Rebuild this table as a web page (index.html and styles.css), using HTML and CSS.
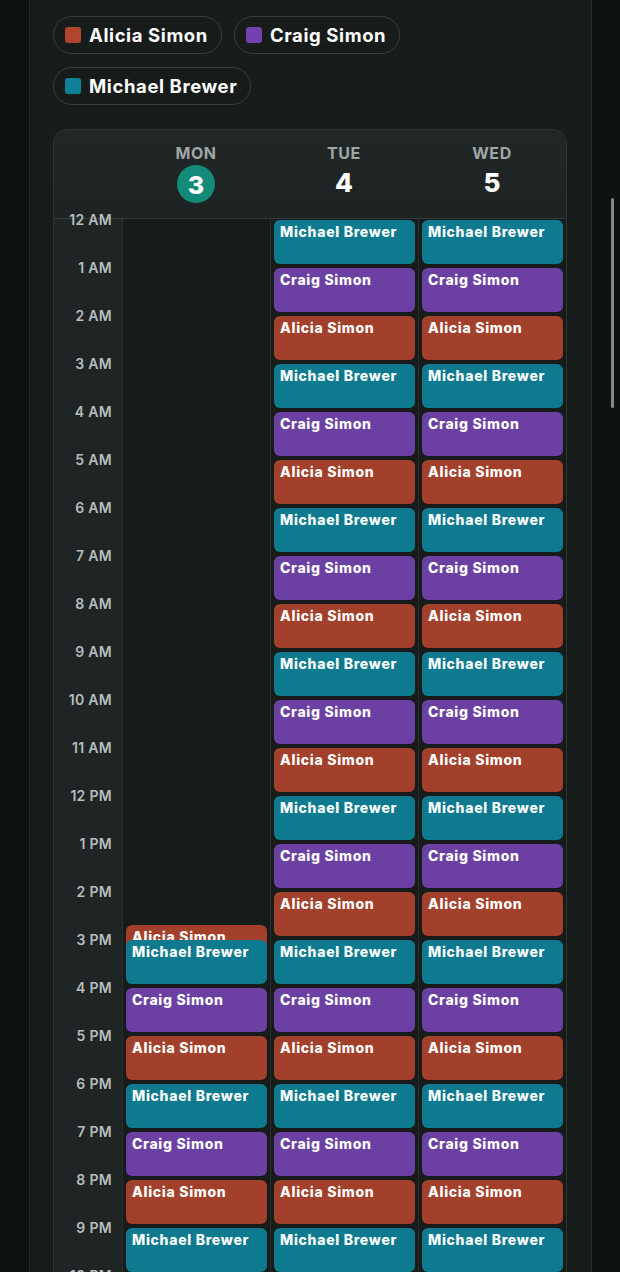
FILE: index.html
```html
<!DOCTYPE html>
<html lang="en">
<head>
<meta charset="utf-8">
<title>Calendar</title>
<link rel="stylesheet" href="styles.css">
</head>
<body>
<div class="panel">
  <div class="legend">
    <div class="chip"><span class="sw a"></span>Alicia Simon</div>
    <div class="chip"><span class="sw c"></span>Craig Simon</div>
    <div class="chip"><span class="sw m"></span>Michael Brewer</div>
  </div>
  <div class="card">
    <div class="head">
      <div></div>
      <div class="day"><div class="dn">MON</div><div class="num today">3</div></div>
      <div class="day"><div class="dn">TUE</div><div class="num">4</div></div>
      <div class="day"><div class="dn">WED</div><div class="num">5</div></div>
    </div>
    <div class="grid">
      <div class="times">
        <div class="hr"><span>12 AM</span></div>
        <div class="hr"><span>1 AM</span></div>
        <div class="hr"><span>2 AM</span></div>
        <div class="hr"><span>3 AM</span></div>
        <div class="hr"><span>4 AM</span></div>
        <div class="hr"><span>5 AM</span></div>
        <div class="hr"><span>6 AM</span></div>
        <div class="hr"><span>7 AM</span></div>
        <div class="hr"><span>8 AM</span></div>
        <div class="hr"><span>9 AM</span></div>
        <div class="hr"><span>10 AM</span></div>
        <div class="hr"><span>11 AM</span></div>
        <div class="hr"><span>12 PM</span></div>
        <div class="hr"><span>1 PM</span></div>
        <div class="hr"><span>2 PM</span></div>
        <div class="hr"><span>3 PM</span></div>
        <div class="hr"><span>4 PM</span></div>
        <div class="hr"><span>5 PM</span></div>
        <div class="hr"><span>6 PM</span></div>
        <div class="hr"><span>7 PM</span></div>
        <div class="hr"><span>8 PM</span></div>
        <div class="hr"><span>9 PM</span></div>
        <div class="hr"><span>10 PM</span></div>
        <div class="hr"><span>11 PM</span></div>
      </div>
      <div class="col mon">
        <div class="ev a">Alicia Simon</div>
        <div class="ev m overlap">Michael Brewer</div>
        <div class="ev c">Craig Simon</div>
        <div class="ev a">Alicia Simon</div>
        <div class="ev m">Michael Brewer</div>
        <div class="ev c">Craig Simon</div>
        <div class="ev a">Alicia Simon</div>
        <div class="ev m">Michael Brewer</div>
        <div class="ev c">Craig Simon</div>
        <div class="ev a">Alicia Simon</div>
      </div>
      <div class="col">
        <div class="ev m">Michael Brewer</div>
        <div class="ev c">Craig Simon</div>
        <div class="ev a">Alicia Simon</div>
        <div class="ev m">Michael Brewer</div>
        <div class="ev c">Craig Simon</div>
        <div class="ev a">Alicia Simon</div>
        <div class="ev m">Michael Brewer</div>
        <div class="ev c">Craig Simon</div>
        <div class="ev a">Alicia Simon</div>
        <div class="ev m">Michael Brewer</div>
        <div class="ev c">Craig Simon</div>
        <div class="ev a">Alicia Simon</div>
        <div class="ev m">Michael Brewer</div>
        <div class="ev c">Craig Simon</div>
        <div class="ev a">Alicia Simon</div>
        <div class="ev m">Michael Brewer</div>
        <div class="ev c">Craig Simon</div>
        <div class="ev a">Alicia Simon</div>
        <div class="ev m">Michael Brewer</div>
        <div class="ev c">Craig Simon</div>
        <div class="ev a">Alicia Simon</div>
        <div class="ev m">Michael Brewer</div>
        <div class="ev c">Craig Simon</div>
        <div class="ev a">Alicia Simon</div>
      </div>
      <div class="col">
        <div class="ev m">Michael Brewer</div>
        <div class="ev c">Craig Simon</div>
        <div class="ev a">Alicia Simon</div>
        <div class="ev m">Michael Brewer</div>
        <div class="ev c">Craig Simon</div>
        <div class="ev a">Alicia Simon</div>
        <div class="ev m">Michael Brewer</div>
        <div class="ev c">Craig Simon</div>
        <div class="ev a">Alicia Simon</div>
        <div class="ev m">Michael Brewer</div>
        <div class="ev c">Craig Simon</div>
        <div class="ev a">Alicia Simon</div>
        <div class="ev m">Michael Brewer</div>
        <div class="ev c">Craig Simon</div>
        <div class="ev a">Alicia Simon</div>
        <div class="ev m">Michael Brewer</div>
        <div class="ev c">Craig Simon</div>
        <div class="ev a">Alicia Simon</div>
        <div class="ev m">Michael Brewer</div>
        <div class="ev c">Craig Simon</div>
        <div class="ev a">Alicia Simon</div>
        <div class="ev m">Michael Brewer</div>
        <div class="ev c">Craig Simon</div>
        <div class="ev a">Alicia Simon</div>
      </div>
    </div>
  </div>
</div>
<div class="scrollbar"></div>
</body>
</html>
```
FILE: styles.css
```css
html, body {
  margin: 0;
  padding: 0;
  height: 1272px;
  overflow: hidden;
  background: #0e1211;
  font-family: Inter, "Liberation Sans", sans-serif;
  color: #fff;
}
.panel {
  margin: 0 28px 0 29px;
  min-height: 1400px;
  background: #181c1b;
  border-left: 1px solid #262c2b;
  border-right: 1px solid #262c2b;
  padding: 16px 24px 0 23px;
}
.legend {
  display: flex;
  flex-wrap: wrap;
  gap: 13px 12px;
}
.chip {
  display: flex;
  align-items: center;
  gap: 8px;
  height: 36px;
  padding: 0 13px 0 11px;
  border: 1px solid #383e3d;
  border-radius: 20px;
  background: #171b1a;
  font-size: 18.5px;
  font-weight: 700;
  letter-spacing: 0.6px;
}
.sw {
  width: 16px;
  height: 16px;
  border-radius: 3px;
}
.sw.a { background: #b1462e; }
.sw.c { background: #7442b0; }
.sw.m { background: #0f8199; }
.card {
  margin-top: 24px;
  border: 1px solid #2e3534;
  border-radius: 14px 14px 0 0;
  overflow: hidden;
  background: #2a302f;
}
.head {
  display: grid;
  grid-template-columns: 68px 1fr 1fr 1fr;
  height: 88px;
  background: linear-gradient(#212726, #1e2423);
  border-bottom: 1px solid #353c3b;
}
.day {
  display: flex;
  flex-direction: column;
  align-items: center;
  padding-top: 15px;
}
.dn {
  font-size: 16px;
  font-weight: 700;
  color: #9fa7a5;
  letter-spacing: 0.6px;
  line-height: 16px;
}
.num {
  margin-top: 4px;
  height: 38px;
  line-height: 36px;
  font-size: 26px;
  font-weight: 800;
  color: #fff;
}
.num.today {
  margin-top: 4px;
  width: 38px;
  border-radius: 50%;
  background: #138a7a;
  text-align: center;
  line-height: 40px;
  font-size: 25px;
}
.grid {
  display: grid;
  grid-template-columns: 68px 1fr 1fr 1fr;
  column-gap: 1px;
}
.times {
  background: #1f2524;
}
.hr {
  height: 48px;
  display: flex;
  justify-content: flex-end;
  padding-right: 10px;
}
.hr span {
  font-size: 14px;
  font-weight: 600;
  color: #b7bebc;
  line-height: 16px;
  letter-spacing: 0.3px;
  transform: translateY(-7px);
}
.col {
  background: #171b1a;
  display: flex;
  flex-direction: column;
  gap: 4px;
  padding: 1px 3px 0;
}
.col.mon {
  padding-top: 706px;
}
.ev {
  position: relative;
  height: 44px;
  box-sizing: border-box;
  border-radius: 6px;
  padding: 4px 6px 0;
  font-size: 14px;
  font-weight: 800;
  line-height: 16px;
  letter-spacing: 0.7px;
  color: #fff;
  overflow: hidden;
  white-space: nowrap;
}
.ev.a { background: #a2402b; }
.ev.c { background: #6b40a2; }
.ev.m { background: #0d7a8f; }
.ev.overlap {
  margin-top: -33px;
}
.scrollbar {
  position: absolute;
  left: 611px;
  top: 198px;
  width: 3px;
  height: 210px;
  border-radius: 2px;
  background: #858b8a;
}
```
